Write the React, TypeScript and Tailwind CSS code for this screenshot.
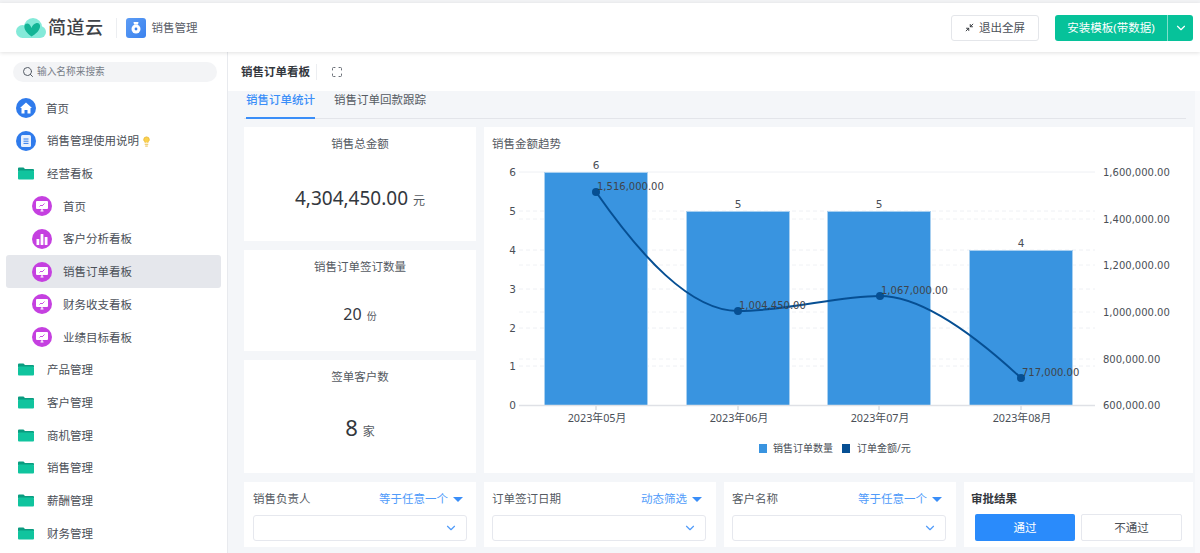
import { ChevronDown, Search, Minimize2, Maximize, Lightbulb } from "lucide-react";

const cjk = { fontFamily: '"Noto Sans", "Noto Sans CJK SC", sans-serif' };
const cjkStack = '"Noto Sans", "Noto Sans CJK SC", sans-serif';

function Logo() {
  return (
    <svg width="30" height="20" viewBox="0 0 30 20">
      <g fill="#84ead9">
        <circle cx="6.500" cy="13.500" r="6.500" />
        <circle cx="17" cy="9" r="9" />
        <circle cx="24" cy="14" r="6" />
        <rect x="6" y="12" width="18" height="8" />
      </g>
      <path d="M15.500 18.500C11 15.500 7.500 11 8.500 7.500c.7-2.200 3.500-2.700 5-1 1 1.100 1.500 2.300 2 3.500.8-2.200 2.500-4.500 5-5 2.500-.4 4 1.500 3.500 4-.6 3.500-4 7-8.500 9.500z" fill="#12b596" />
    </svg>
  );
}

function AppIcon() {
  return (
    <div className="flex h-5 w-5 items-center justify-center rounded-[3px] bg-gradient-to-br from-[#5c9cf5] to-[#3b82ee]">
      <svg width="12" height="13" viewBox="0 0 12 13">
        <path d="M4 3.500 3.500 1h5L8 3.500z" fill="#fff" />
        <circle cx="6" cy="8" r="4.500" fill="#fff" />
        <circle cx="6" cy="8" r="1.400" fill="#3b82ee" />
      </svg>
    </div>
  );
}

function HomeIcon() {
  return (
    <div className="flex h-5 w-5 items-center justify-center rounded-full bg-[#2f7bec]">
      <svg width="12" height="12" viewBox="0 0 12 12">
        <path d="M6 .500 12 6h-1.500v5.500H7.500V8h-3v3.500h-3V6H0z" fill="#fff" />
      </svg>
    </div>
  );
}

function DocIcon() {
  return (
    <div className="flex h-5 w-5 items-center justify-center rounded-full bg-[#2f7bec]">
      <svg width="10" height="12" viewBox="0 0 10 12">
        <rect width="10" height="12" rx="1.500" fill="#e8f0fd" />
        <path d="M2.500 4h5M2.500 6.200h5M2.500 8.400h5" stroke="#2f7bec" strokeWidth="1" />
      </svg>
    </div>
  );
}

function Folder() {
  return (
    <div className="flex h-5 w-5 items-center justify-center">
      <svg width="16" height="13" viewBox="0 0 16 13">
        <path d="M0 1.500A1 1 0 0 1 1 .500h4.500L7 2h8a1 1 0 0 1 1 1v1H0z" fill="#0a9c80" />
        <rect y="3.500" width="16" height="9" rx="1" fill="#10c49e" />
      </svg>
    </div>
  );
}

function BoardIcon() {
  return (
    <div className="flex h-5 w-5 items-center justify-center rounded-full bg-[#c540e0]">
      <svg width="12" height="12" viewBox="0 0 12 12">
        <rect y="1" width="12" height="8" rx="1" fill="#fff" />
        <path d="M4.500 11h3M6 9v2" stroke="#fff" strokeWidth="1.200" />
        <path d="M3.500 6.500 5 5l1 1 2.500-2.500" fill="none" stroke="#c540e0" strokeWidth="0.900" />
      </svg>
    </div>
  );
}

function BarsIcon() {
  return (
    <div className="flex h-5 w-5 items-center justify-center rounded-full bg-[#c540e0]">
      <svg width="12" height="12" viewBox="0 0 12 12" fill="#fff">
        <rect x="0.500" y="6" width="2.800" height="6" rx="0.500" />
        <rect x="4.600" y="1" width="2.800" height="11" rx="0.500" />
        <rect x="8.700" y="4" width="2.800" height="8" rx="0.500" />
      </svg>
    </div>
  );
}

const navItems = [
  { label: "首页", icon: "home" },
  { label: "销售管理使用说明", icon: "doc", bulb: true },
  { label: "经营看板", icon: "folder" },
  { label: "首页", icon: "board", child: true },
  { label: "客户分析看板", icon: "bars", child: true },
  { label: "销售订单看板", icon: "board", child: true, active: true },
  { label: "财务收支看板", icon: "board", child: true },
  { label: "业绩目标看板", icon: "board", child: true },
  { label: "产品管理", icon: "folder" },
  { label: "客户管理", icon: "folder" },
  { label: "商机管理", icon: "folder" },
  { label: "销售管理", icon: "folder" },
  { label: "薪酬管理", icon: "folder" },
  { label: "财务管理", icon: "folder" },
];

function NavIcon({ name }: { name: string }) {
  if (name === "home") return <HomeIcon />;
  if (name === "doc") return <DocIcon />;
  if (name === "folder") return <Folder />;
  if (name === "bars") return <BarsIcon />;
  return <BoardIcon />;
}

function Sidebar() {
  return (
    <aside className="flex w-[228px] shrink-0 flex-col border-r border-[#e8eaee] bg-white">
      <div className="px-[13px] pt-[10px]">
        <div className="flex h-5 w-[204px] items-center gap-[3px] rounded-full bg-[#f3f4f6] pl-[9px]">
          <Search size={12} className="text-[#555c66]" />
          <span className="text-[9.700px] text-[#777d87]">输入名称来搜索</span>
        </div>
      </div>
      <nav className="flex flex-col pt-[10px]">
        {navItems.map((item, i) => (
          <div
            key={i}
            className={`mx-[6px] flex h-[32.700px] w-[215px] items-center rounded-[3px] ${item.child ? "pl-[26px]" : "pl-[10px]"} ${item.active ? "bg-[#e5e7ec]" : ""}`}
          >
            <NavIcon name={item.icon} />
            <span className={`text-[11.500px] text-[#4b5058] ${item.icon === "home" ? "ml-[10px]" : "ml-[11px]"}`}>{item.label}</span>
            {item.bulb && <Lightbulb size={11} className="ml-[2px] fill-[#fbd24e] text-[#e9b93a]" />}
          </div>
        ))}
      </nav>
    </aside>
  );
}

const yLeft = [
  [6, 172],
  [5, 211],
  [4, 250],
  [3, 289],
  [2, 328],
  [1, 366],
  [0, 405],
];
const yRight = [
  ["1,600,000.00", 172],
  ["1,400,000.00", 219],
  ["1,200,000.00", 265],
  ["1,000,000.00", 312],
  ["800,000.00", 359],
  ["600,000.00", 405],
];
const bars = [
  { x: 544, top: 172, n: 6, month: "2023年05月" },
  { x: 686, top: 211, n: 5, month: "2023年06月" },
  { x: 827, top: 211, n: 5, month: "2023年07月" },
  { x: 969, top: 250, n: 4, month: "2023年08月" },
];
const points = [
  { x: 596, y: 192, label: "1,516,000.00" },
  { x: 738, y: 311, label: "1,004,450.00" },
  { x: 880, y: 296, label: "1,067,000.00" },
  { x: 1021, y: 378, label: "717,000.00" },
];

// the viewBox uses page coordinates so the numbers can be read off the screenshot
function TrendChart() {
  const dejavu = '"DejaVu Sans", sans-serif';
  return (
    <svg width="709" height="320" viewBox="484 153 709 320" className="block">
      {yLeft.slice(1, 6).map(([, y]) => (
        <line key={y} x1="519" x2="1095" y1={y} y2={y} stroke="#eef0f4" strokeDasharray="4 3" />
      ))}
      {yRight.slice(1, 5).map(([, y]) => (
        <line key={y} x1="519" x2="1095" y1={y} y2={y} stroke="#f0f2f5" strokeDasharray="4 3" />
      ))}
      <line x1="519" x2="1095" y1="172" y2="172" stroke="#eef0f4" />
      {bars.map((b) => (
        <g key={b.x}>
          <rect x={b.x + 0.5} y={b.top + 0.5} width="103" height={405 - b.top} fill="#3994e0" stroke="#a9d0f0" strokeWidth="1" />
          <text x={b.x + 52} y={b.top - 3} textAnchor="middle" fontSize="10.500" fill="#4a4f57" fontFamily={dejavu}>
            {b.n}
          </text>
          <line x1={b.x + 52} x2={b.x + 52} y1="405" y2="410" stroke="#c9ccd2" />
          <text x={b.x + 53} y="422" textAnchor="middle" fontSize="10.800" fill="#4a4f57" fontFamily={cjkStack}>
            {b.month}
          </text>
        </g>
      ))}
      <line x1="519" x2="1095" y1="405.500" y2="405.500" stroke="#dfe1e6" strokeWidth="1.500" />
      {yLeft.map(([v, y]) => (
        <text key={v} x="516" y={Number(y) + 4} textAnchor="end" fontSize="10.500" fill="#4a4f57" fontFamily={dejavu}>
          {v}
        </text>
      ))}
      {yRight.map(([v, y]) => (
        <text key={v} x="1103" y={Number(y) + 4} fontSize="10" fill="#4a4f57" fontFamily={dejavu}>
          {v}
        </text>
      ))}
      <path
        d="M596 192C640 255 690 311 738 311C790 311 835 296 880 296C925 296 980 340 1021 378"
        fill="none"
        stroke="#064f93"
        strokeWidth="2"
      />
      {points.map((p) => (
        <g key={p.x}>
          <circle cx={p.x} cy={p.y} r="4" fill="#064f93" />
          <text x={p.x + 1} y={p.y - 2} fontSize="10" fill="#3f444c" fontFamily={dejavu}>
            {p.label}
          </text>
        </g>
      ))}
      <rect x="759" y="444" width="8" height="9" fill="#3994e0" />
      <text x="773" y="452" fontSize="10" fill="#4a4f57" fontFamily={cjkStack}>
        销售订单数量
      </text>
      <rect x="842" y="444" width="8" height="9" fill="#064f93" />
      <text x="857" y="452" fontSize="10" fill="#4a4f57" fontFamily={cjkStack}>
        订单金额/元
      </text>
    </svg>
  );
}

function Stat({ title, value, unit, valueClass, unitClass, boxClass }: { title: string; value: string; unit: string; valueClass: string; unitClass: string; boxClass: string }) {
  return (
    <div className={`flex flex-col items-center bg-white ${boxClass}`}>
      <div className="pt-[8px] text-[11.500px] leading-[18px] text-[#555a62]">{title}</div>
      <div className="flex flex-1 items-baseline justify-center text-[#33373d]">
        <span className={valueClass}>{value}</span>
        <span className={`ml-[5px] text-[#555a62] ${unitClass}`}>{unit}</span>
      </div>
    </div>
  );
}

function Filter({ label, mode, boxClass }: { label: string; mode: string; boxClass: string }) {
  return (
    <div className={`bg-white pt-[8px] ${boxClass}`}>
      <div className="flex h-[18px] w-[214px] items-center justify-between pr-[4px]">
        <span className="text-[11.500px] text-[#555a62]">{label}</span>
        <span className="flex items-center gap-[5px] text-[11.500px] text-[#4f9bfa]">
          {mode}
          <span className="h-0 w-0 border-x-[5px] border-t-[5px] border-x-transparent border-t-[#3a8ef8]" />
        </span>
      </div>
      <div className="mt-[7px] flex h-[26px] w-[214px] items-center justify-end rounded-[3px] border border-[#e6e8ee] pr-[8px]">
        <ChevronDown size={14} className="text-[#4f9bfa]" />
      </div>
    </div>
  );
}

export default function App() {
  return (
    <div className="flex h-[553px] w-[1200px] flex-col overflow-hidden bg-white" style={cjk}>
      <div className="h-[3px] bg-[#f2f3f5]" />
      <header className="relative z-10 flex h-[49px] shrink-0 items-center bg-white pl-4 pr-[7px] shadow-[0_1px_4px_rgba(0,0,0,0.12)]">
        <Logo />
        <span className="ml-[2px] text-[18px] font-medium tracking-[0.500px] text-[#3f4348]">简道云</span>
        <div className="ml-[12px] mr-[9px] h-5 w-px bg-[#eceef1]" />
        <AppIcon />
        <span className="ml-[6px] text-[11.500px] text-[#5b6068]">销售管理</span>
        <button className="ml-auto flex h-[26px] w-[88px] items-center justify-center gap-[5px] rounded-[3px] border border-[#e4e6ea] bg-white text-[11.500px] text-[#4b5058]">
          <Minimize2 size={9} className="text-[#33373d]" strokeWidth={2.500} />
          退出全屏
        </button>
        <div className="ml-4 flex h-[26px] overflow-hidden rounded-[3px] bg-[#06c29a] text-white">
          <span className="flex w-[112px] items-center justify-center text-[11.500px]">安装模板(带数据)</span>
          <span className="w-px bg-[#7fe0cb]" />
          <span className="flex w-[25px] items-center justify-center">
            <ChevronDown size={14} />
          </span>
        </div>
      </header>
      <div className="flex min-h-0 flex-1">
        <Sidebar />
        <main className="flex min-w-0 flex-1 flex-col bg-[#f4f6f9]">
          <div className="flex h-[39px] shrink-0 items-center bg-white pl-[13px]">
            <span className="text-[11.500px] font-bold text-[#33373d]">销售订单看板</span>
            <span className="ml-[6px] h-4 w-px bg-[#eceef1]" />
            <Maximize size={12} className="ml-[14px] text-[#6b7078]" />
          </div>
          <div className="flex flex-1">
            <div className="flex-1 pl-4 pr-[2px]">
              <div className="mr-[7px] flex h-[28px] gap-[19px] border-b border-[#e3e5ea] pl-[2px]">
                <span className="-mb-px flex h-[28px] items-start border-b-2 border-[#3a8ef8] text-[11.500px] font-medium leading-[17px] text-[#3a8ef8]">销售订单统计</span>
                <span className="text-[11.500px] leading-[17px] text-[#555a62]">销售订单回款跟踪</span>
              </div>
              <div className="mt-2 grid grid-cols-[232px_709px] gap-2">
                <div className="flex flex-col gap-[9px]">
                  <Stat title="销售总金额" value="4,304,450.00" unit="元" valueClass="text-[19px]" unitClass="text-[12px]" boxClass="h-[114px] [&>div:last-child]:pt-[31px]" />
                  <Stat title="销售订单签订数量" value="20" unit="份" valueClass="text-[16px]" unitClass="text-[10px]" boxClass="h-[101px] [&>div:last-child]:pt-[26px]" />
                  <Stat title="签单客户数" value="8" unit="家" valueClass="text-[22px]" unitClass="text-[12px]" boxClass="h-[113px] [&>div:last-child]:pt-[25px]" />
                </div>
                <div className="bg-white">
                  <div className="px-2 pt-2 text-[11.500px] leading-[18px] text-[#555a62]">销售金额趋势</div>
                  <TrendChart />
                </div>
              </div>
              <div className="mt-[9px] grid h-[65px] grid-cols-[232px_232px_232px_229px] gap-2">
                <Filter label="销售负责人" mode="等于任意一个" boxClass="pl-[9px]" />
                <Filter label="订单签订日期" mode="动态筛选" boxClass="pl-[8px]" />
                <Filter label="客户名称" mode="等于任意一个" boxClass="pl-[8px]" />
                <div className="bg-white pl-[7px] pt-[8px]">
                  <div className="h-[18px] text-[11.500px] font-bold leading-[18px] text-[#33373d]">审批结果</div>
                  <div className="mt-[6px] flex gap-[6px] pl-[4px]">
                    <button className="h-[27px] w-[100px] rounded-[2px] bg-[#2a8bfb] text-[11.500px] text-white">通过</button>
                    <button className="h-[27px] w-[101px] rounded-[2px] border border-[#e6e8ee] bg-white text-[11.500px] text-[#4b5058]">不通过</button>
                  </div>
                </div>
              </div>
            </div>
            <div className="w-[5px] bg-[#f9fafc]" />
          </div>
        </main>
      </div>
    </div>
  );
}
